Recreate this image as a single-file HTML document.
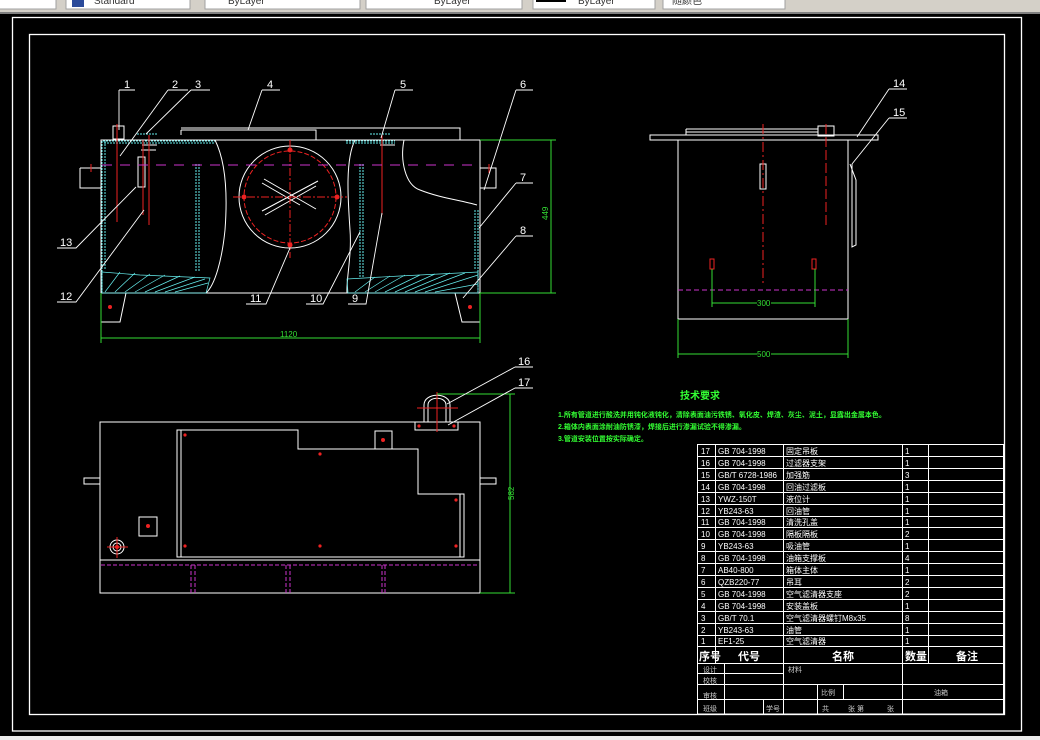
<!DOCTYPE html>
<html><head><meta charset="utf-8"><style>
html,body{margin:0;padding:0;width:1040px;height:740px;overflow:hidden;background:#000}
svg{display:block}
text{font-family:"Liberation Sans","Noto Sans CJK SC",sans-serif}
</style></head><body>
<svg width="1040" height="740" viewBox="0 0 1040 740" xmlns="http://www.w3.org/2000/svg">
<!-- toolbar -->
<rect x="0" y="0" width="1040" height="12" fill="#d4d0c8"/>
<rect x="0" y="12" width="1040" height="2" fill="#808080"/>
<g fill="#fff" stroke="#a0a0a0" stroke-width="1">
<rect x="-2" y="-4" width="58" height="13"/><rect x="66" y="-4" width="124" height="13"/>
<rect x="205" y="-4" width="155" height="13"/><rect x="366" y="-4" width="156" height="13"/>
<rect x="533" y="-4" width="122" height="13"/><rect x="663" y="-4" width="122" height="13"/>
</g>
<g font-size="10" fill="#333"><text x="94" y="4">Standard</text><text x="228" y="4">ByLayer</text><text x="434" y="4">ByLayer</text><text x="578" y="4">ByLayer</text><text x="672" y="4">随颜色</text></g>
<rect x="72" y="-2" width="12" height="9" fill="#2a4a9a"/>
<rect x="536" y="-1" width="30" height="3" fill="#000"/>
<rect x="0" y="736" width="1040" height="4" fill="#ececec"/>
<!-- frames -->
<g fill="none" stroke="#fff" stroke-width="1.3">
<rect x="12.5" y="17.5" width="1009" height="713.5"/>
<rect x="29.5" y="34.5" width="975" height="680"/>
</g>

<!-- FRONT VIEW -->
<g fill="none" stroke="#fff" stroke-width="1">
<path d="M101 140H480V293H101Z"/>
<path d="M101 293V322H120L126 293"/><path d="M480 293V322H462L455 293"/>
<path d="M80 168H101M80 168V188H101"/><path d="M480 168H496V188H480"/>
<path d="M181 130H316V140M181 130V135M322 128H460V140M181 128H460"/>
<path d="M215 140C225 160 228 190 225 230 222 260 215 285 206 293"/>
<path d="M355 140C345 160 348 200 350 230 352 255 346 280 347 293"/>
<path d="M404 140C400 160 405 185 420 190 440 198 460 200 477 205"/>
<circle cx="290" cy="197" r="51"/>
<path d="M262 183L300 205M262 211L318 181M264 179L316 209M265 215L316 186"/>
<path d="M113 126H124V139H113Z"/><path d="M142 145H157M141 150H156"/><path d="M380 145H395"/>
<rect x="138" y="157" width="7" height="30" />
</g>
<g fill="none" stroke="#6ee" stroke-width="1" stroke-dasharray="2 1">
<path d="M102 141V292M105 141V270M478 210V292M475 210V270"/>
<path d="M103 141H215M104 143H215M346 141H395M346 143H395"/>
<path d="M196 164V272M199 164V272M360 164V278M363 164V278"/>
<path d="M137 134H158M370 134H390"/>
</g>
<g fill="none" stroke="#6ee" stroke-width="0.7">
<path d="M102 272L140 275 210 278 206 293H102Z"/>
<path d="M347 279L400 276 478 272V293H348Z"/>
<path d="M105 292L120 272M115 292L135 273M125 292L150 274M135 292L165 275M145 292L180 276M155 292L195 277M165 292L205 279M175 292L208 283M355 292L375 277M365 292L390 276M375 292L405 275M385 292L420 275M395 292L435 274M405 292L450 273M415 292L465 273M425 292L478 275M435 292L478 284"/>
</g>
<g fill="none" stroke="#e22" stroke-width="1">
<circle cx="290" cy="197" r="46" stroke-dasharray="5 2"/>
<path d="M233 197H347M290 140V258" stroke-dasharray="8 2 2 2"/>
<path d="M117 124V222M149 135V225M382 135V215M143 140V215" />
<path d="M91 164V172M489 164V173"/>
</g>
<g fill="#e22"><circle cx="290" cy="150" r="2.5"/><circle cx="290" cy="245" r="2.5"/><circle cx="244" cy="197" r="2.5"/><circle cx="337" cy="197" r="2.5"/><circle cx="110" cy="307" r="2"/><circle cx="470" cy="307" r="2"/></g>
<path d="M102 165H480" stroke="#c3c" stroke-dasharray="10 8" stroke-width="1"/>
<!-- dims -->
<g stroke="#3d3" fill="none" stroke-width="1">
<path d="M480 140H556M480 293H556M551 140V293"/>
<path d="M101 293V343M480 293V343M101 338H480"/>
</g>
<g fill="#3d3" font-size="8"><text x="280" y="337">1120</text><text x="548" y="220" transform="rotate(-90 548 220)">449</text></g>
<!-- leaders -->
<g stroke="#fff" fill="none" stroke-width="0.9">
<path d="M119 90H135M119 90V130"/><path d="M168 90H188M168 90L120 156"/><path d="M191 90H210M191 90L146 134"/>
<path d="M262 90H280M262 90L248 130"/><path d="M395 90H413M395 90L381 138"/><path d="M516 90H533M516 90L484 190"/>
<path d="M516 183H533M516 183L479 228"/><path d="M516 236H533M516 236L463 298"/>
<path d="M57 248H76L136 187"/><path d="M57 302H76L144 210"/>
<path d="M246 304H266L290 248"/><path d="M306 304H323L360 232"/><path d="M348 304H366L382 213"/>
</g>
<g fill="#fff" font-size="11"><text x="124" y="88">1</text><text x="172" y="88">2</text><text x="195" y="88">3</text><text x="267" y="88">4</text><text x="400" y="88">5</text><text x="520" y="88">6</text><text x="520" y="181">7</text><text x="520" y="234">8</text><text x="60" y="246">13</text><text x="60" y="300">12</text><text x="250" y="302">11</text><text x="310" y="302">10</text><text x="352" y="302">9</text></g>

<!-- SIDE VIEW -->
<g fill="none" stroke="#fff" stroke-width="1">
<path d="M650 135H878V140H650Z"/>
<path d="M678 140V319H848V140"/>
<path d="M686 129H818V135M686 132H818M686 129V135"/>
<path d="M818 126H834V136H818Z"/>
<rect x="760" y="164" width="6" height="25"/>
<path d="M850 164L856 180V245L852 247V164"/>
</g>
<g stroke="#e22" fill="none"><path d="M763 124V283" stroke-dasharray="10 3 2 3"/><path d="M826 124V226" stroke-dasharray="10 3"/>
<rect x="710" y="259" width="4" height="10"/><rect x="812" y="259" width="4" height="10"/></g>
<path d="M678 290H848" stroke="#c3c" stroke-dasharray="5 3"/>
<g stroke="#3d3" fill="none"><path d="M712 269V307M815 269V307M712 303H757M771 303H815"/><path d="M678 319V358M848 319V358M678 354H757M771 354H848"/></g>
<g fill="#3d3" font-size="8"><text x="757" y="306">300</text><text x="757" y="357">500</text></g>
<g stroke="#fff" fill="none" stroke-width="0.9"><path d="M889 89H907M889 89L857 137"/><path d="M889 118H907M889 118L852 164"/></g>
<g fill="#fff" font-size="11"><text x="893" y="87">14</text><text x="893" y="116">15</text></g>

<!-- TOP VIEW -->
<g fill="none" stroke="#fff" stroke-width="1">
<rect x="100" y="422" width="380" height="171"/>
<path d="M100 560H480"/>
<path d="M84 478H100V484H84Z"/><path d="M480 478H496V484H480Z"/>
<path d="M177 430H298V449H418V494H464V557H177Z"/>
<path d="M181 430V557M460 494V557"/>
<rect x="415" y="422" width="43" height="8"/>
<path d="M424 422V405C424 392 450 392 450 405V422M428 422V405C428 396 446 396 446 405V422"/>
<rect x="139" y="517" width="18" height="19"/>
<rect x="375" y="431" width="17" height="18"/>
<circle cx="117" cy="547" r="7"/><circle cx="117" cy="547" r="4"/>
</g>
<g fill="#e22"><circle cx="185" cy="435" r="1.6"/><circle cx="320" cy="454" r="1.6"/><circle cx="456" cy="500" r="1.6"/><circle cx="185" cy="546" r="1.6"/><circle cx="320" cy="546" r="1.6"/><circle cx="456" cy="546" r="1.6"/><circle cx="148" cy="526" r="2"/><circle cx="383" cy="440" r="2"/><circle cx="117" cy="547" r="2"/><circle cx="419" cy="426" r="1.6"/><circle cx="454" cy="426" r="1.6"/></g>
<g stroke="#e22" fill="none"><path d="M437 392V432M417 408H458"/><path d="M107 547H128M117 537V558"/></g>
<g stroke="#c3c" fill="none" stroke-dasharray="4 2"><path d="M101 565H478"/><path d="M191 565V593M195 565V593M286 565V593M290 565V593M382 565V593M385 565V593"/></g>
<g stroke="#3d3" fill="none"><path d="M437 394H515M480 593H515M510 394V593"/></g>
<text x="514" y="500" fill="#3d3" font-size="8" transform="rotate(-90 514 500)">582</text>
<g stroke="#fff" fill="none" stroke-width="0.9"><path d="M515 367H533M515 367L447 404"/><path d="M515 388H533M515 388L448 425"/></g>
<g fill="#fff" font-size="11"><text x="518" y="365">16</text><text x="518" y="386">17</text></g>

<!-- tech requirements -->
<g fill="#3f3" font-weight="bold">
<text x="680" y="399" font-size="10">技术要求</text>
<text x="558" y="417" font-size="7">1.所有管道进行酸洗并用钝化液钝化，清除表面油污铁锈、氧化皮、焊渣、灰尘、泥土，显露出金属本色。</text>
<text x="558" y="429" font-size="7">2.箱体内表面涂耐油防锈漆，焊接后进行渗漏试验不得渗漏。</text>
<text x="558" y="441" font-size="7">3.管道安装位置按实际确定。</text>
</g>

<!-- TABLE -->
<g stroke="#fff" fill="none" stroke-width="1">
<rect x="697.5" y="444.5" width="306" height="269.5"/>
<path d="M698 456.5H1004M698 468.5H1004M698 480.5H1004M698 492.5H1004M698 504.5H1004M698 516.5H1004M698 527.5H1004M698 539.5H1004M698 551.5H1004M698 563.5H1004M698 575.5H1004M698 587.5H1004M698 599.5H1004M698 611.5H1004M698 623.5H1004M698 635.5H1004M698 646.5H1004M698 663.5H1004"/>
<path d="M715.5 444V663M783.5 444V714M902.5 444V714M928.5 444V663"/>
<path d="M698 673.5H783M698 684.5H902M698 699.5H902M818 684.5H1004M818 699.5H1004"/>
<path d="M724.5 663V714M817.5 684V714M843.5 684V699M763.5 699V714"/>
</g>
<g fill="#fff" font-size="8">
<text x="701" y="454">17</text><text x="718" y="454">GB 704-1998</text><text x="786" y="454">固定吊板</text><text x="905" y="454">1</text>
<text x="701" y="466">16</text><text x="718" y="466">GB 704-1998</text><text x="786" y="466">过滤器支架</text><text x="905" y="466">1</text>
<text x="701" y="478">15</text><text x="718" y="478">GB/T 6728-1986</text><text x="786" y="478">加强筋</text><text x="905" y="478">3</text>
<text x="701" y="490">14</text><text x="718" y="490">GB 704-1998</text><text x="786" y="490">回油过滤板</text><text x="905" y="490">1</text>
<text x="701" y="502">13</text><text x="718" y="502">YWZ-150T</text><text x="786" y="502">液位计</text><text x="905" y="502">1</text>
<text x="701" y="514">12</text><text x="718" y="514">YB243-63</text><text x="786" y="514">回油管</text><text x="905" y="514">1</text>
<text x="701" y="525">11</text><text x="718" y="525">GB 704-1998</text><text x="786" y="525">清洗孔盖</text><text x="905" y="525">1</text>
<text x="701" y="537">10</text><text x="718" y="537">GB 704-1998</text><text x="786" y="537">隔板隔板</text><text x="905" y="537">2</text>
<text x="701" y="549">9</text><text x="718" y="549">YB243-63</text><text x="786" y="549">吸油管</text><text x="905" y="549">1</text>
<text x="701" y="561">8</text><text x="718" y="561">GB 704-1998</text><text x="786" y="561">油箱支撑板</text><text x="905" y="561">4</text>
<text x="701" y="573">7</text><text x="718" y="573">AB40-800</text><text x="786" y="573">箱体主体</text><text x="905" y="573">1</text>
<text x="701" y="585">6</text><text x="718" y="585">QZB220-77</text><text x="786" y="585">吊耳</text><text x="905" y="585">2</text>
<text x="701" y="597">5</text><text x="718" y="597">GB 704-1998</text><text x="786" y="597">空气滤清器支座</text><text x="905" y="597">2</text>
<text x="701" y="609">4</text><text x="718" y="609">GB 704-1998</text><text x="786" y="609">安装盖板</text><text x="905" y="609">1</text>
<text x="701" y="621">3</text><text x="718" y="621">GB/T 70.1</text><text x="786" y="621">空气滤清器螺钉M8x35</text><text x="905" y="621">8</text>
<text x="701" y="633">2</text><text x="718" y="633">YB243-63</text><text x="786" y="633">油管</text><text x="905" y="633">1</text>
<text x="701" y="644">1</text><text x="718" y="644">EF1-25</text><text x="786" y="644">空气滤清器</text><text x="905" y="644">1</text>
</g>
<g fill="#fff" font-size="11" font-weight="bold"><text x="699" y="660">序号</text><text x="738" y="660">代号</text><text x="832" y="660">名称</text><text x="905" y="660">数量</text><text x="956" y="660">备注</text></g>
<g fill="#ccc" font-size="7"><text x="703" y="672">设计</text><text x="703" y="683">校核</text><text x="703" y="698">审核</text><text x="703" y="711">班级</text><text x="766" y="711">学号</text><text x="788" y="672">材料</text><text x="821" y="695">比例</text><text x="934" y="695">油箱</text><text x="822" y="711">共</text><text x="848" y="711">张 第</text><text x="887" y="711">张</text></g>
</svg>
</body></html>
